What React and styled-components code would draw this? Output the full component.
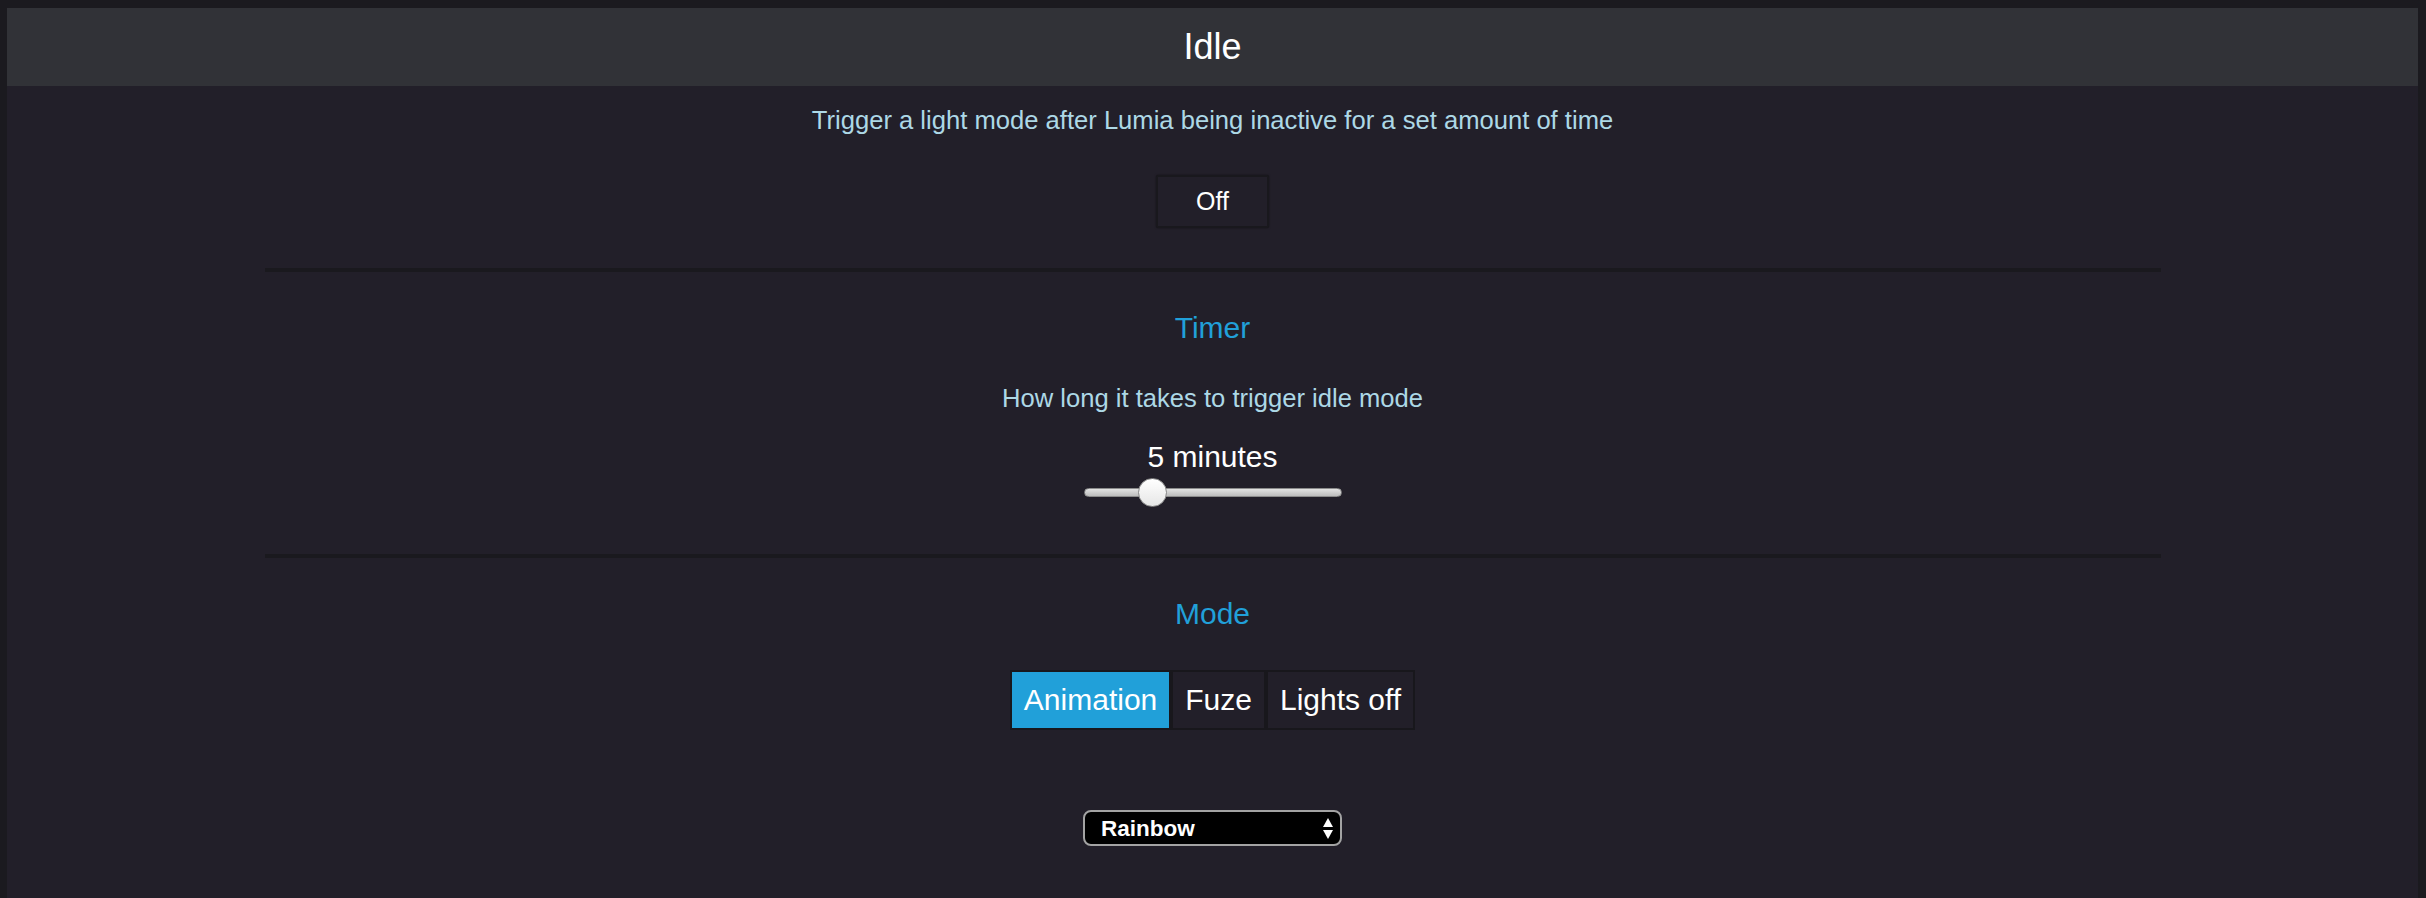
import React from "react";
import styled, { createGlobalStyle } from "styled-components";

const GlobalStyle = createGlobalStyle`
  html, body {
    margin: 0;
    padding: 0;
    background: #1b1a1f;
    font-family: "Liberation Sans", Arial, sans-serif;
  }
  #root {
    padding: 8px 8px 0 7px;
  }
`;

const Panel = styled.div`
  background: #221f29;
  min-height: 890px;
  display: flex;
  flex-direction: column;
  align-items: center;
`;

const Header = styled.div`
  align-self: stretch;
  height: 78px;
  line-height: 78px;
  background: #313237;
  color: #fff;
  font-size: 36px;
  text-align: center;
`;

const Text = styled.p`
  margin: ${({ top }) => top}px 0 0;
  font-size: 25.6px;
  line-height: 28px;
  color: #add8e6;
  text-align: center;
`;

const ToggleButton = styled.button`
  margin-top: 41px;
  width: 113px;
  height: 53px;
  background: #221f29;
  border: 2px solid #19181d;
  box-shadow: 0 0 2px rgba(0, 0, 0, 0.5);
  border-radius: 2px;
  color: #fff;
  font-family: inherit;
  font-size: 25px;
  padding: 0;
`;

const Divider = styled.hr`
  width: 1896px;
  height: 4px;
  margin: ${({ top }) => top}px 0 0;
  border: 0;
  background: #1a191e;
`;

const Heading = styled.h2`
  margin: 38px 0 0;
  font-size: 30px;
  line-height: 36px;
  font-weight: normal;
  color: #21a0d9;
`;

const Value = styled.div`
  margin-top: 28px;
  font-size: 30px;
  line-height: 34px;
  color: #fff;
`;

const Slider = styled.input`
  -webkit-appearance: none;
  appearance: none;
  margin: 4px 0 0;
  width: 258px;
  height: 29px;
  background: transparent;

  &::-webkit-slider-runnable-track {
    height: 9px;
    border-radius: 5px;
    border: 1px solid #8c8c8c;
    background: linear-gradient(#e2e2e2, #bdbdbd);
    box-sizing: border-box;
  }

  &::-webkit-slider-thumb {
    -webkit-appearance: none;
    width: 29px;
    height: 29px;
    margin-top: -11px;
    border-radius: 50%;
    border: 1px solid #8a8a8a;
    background: linear-gradient(#ffffff, #e6e6e6);
    box-sizing: border-box;
  }
`;

const Group = styled.div`
  margin-top: 38px;
  display: inline-flex;
  gap: 4px;
  padding: 2px;
  background: #18171c;
`;

const GroupButton = styled.button`
  height: 56px;
  padding: 0 12px;
  border: 0;
  background: ${({ active }) => (active ? "#21a0d9" : "#221f29")};
  color: #fff;
  font-family: inherit;
  font-size: 30px;
`;

const SelectWrap = styled.div`
  position: relative;
  margin-top: 80px;
  width: 259px;
  height: 36px;
`;

const Select = styled.select`
  -webkit-appearance: none;
  appearance: none;
  width: 100%;
  height: 100%;
  box-sizing: border-box;
  border: 2px solid #a3a3a3;
  border-radius: 8px;
  background: #000;
  color: #fff;
  font-family: inherit;
  font-weight: bold;
  font-size: 22.5px;
  padding: 0 0 0 16px;
`;

const Arrows = styled.svg`
  position: absolute;
  right: 9px;
  top: 8px;
  pointer-events: none;
`;

const modes = ["Animation", "Fuze", "Lights off"];

const App = () => {
  return (
    <>
      <GlobalStyle />
      <Panel>
        <Header>Idle</Header>
        <Text top={20}>
          Trigger a light mode after Lumia being inactive for a set amount of time
        </Text>
        <ToggleButton>Off</ToggleButton>

        <Divider top={40} />
        <Heading>Timer</Heading>
        <Text top={38}>How long it takes to trigger idle mode</Text>
        <Value>5 minutes</Value>
        <Slider type="range" min={1} max={18} defaultValue={5} />

        <Divider top={47} />
        <Heading>Mode</Heading>
        <Group>
          {modes.map((m) => (
            <GroupButton key={m} active={m === "Animation"}>
              {m}
            </GroupButton>
          ))}
        </Group>

        <SelectWrap>
          <Select defaultValue="Rainbow">
            <option>Rainbow</option>
          </Select>
          <Arrows width="10" height="21" viewBox="0 0 10 21">
            <path d="M5 0 L10 9 L0 9 Z" fill="#fff" />
            <path d="M0 12 L10 12 L5 21 Z" fill="#fff" />
          </Arrows>
        </SelectWrap>
      </Panel>
    </>
  );
};

export default App;
